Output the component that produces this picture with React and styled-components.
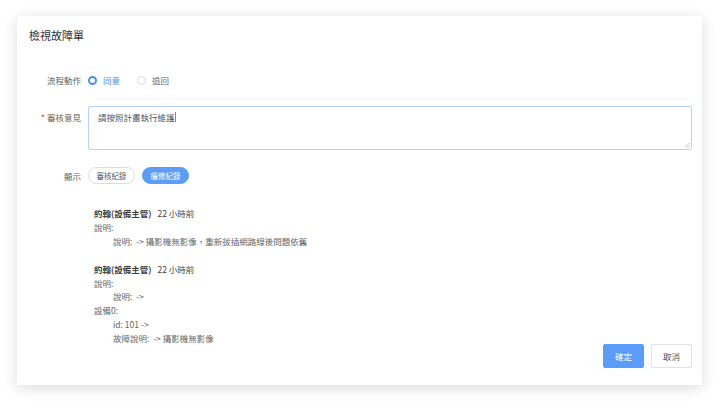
import React from 'react';
import styled, { createGlobalStyle } from 'styled-components';

const GlobalStyle = createGlobalStyle`
  html, body {
    margin: 0;
    padding: 0;
    background: #ffffff;
  }
  body {
    font-family: "Noto Sans CJK TC", "Noto Sans", "Liberation Sans", sans-serif;
    color: #666;
  }
`;

const Page = styled.div`
  width: 720px;
  height: 404px;
  padding: 16px 18px 19px 17px;
  box-sizing: border-box;
  background: #ffffff;
`;

const Card = styled.div`
  height: 100%;
  background: #fff;
  box-shadow: 0 3px 14px rgba(0, 0, 0, 0.14);
  display: flex;
  flex-direction: column;
  padding: 12px 10px 17px 12px;
  box-sizing: border-box;
`;

const Title = styled.div`
  font-size: 11px;
  line-height: 15px;
  color: #333;
`;

const Row = styled.div`
  display: flex;
  align-items: ${p => (p.$top ? 'flex-start' : 'center')};
  margin-top: ${p => p.$mt}px;
`;

const Label = styled.div`
  width: 52px;
  flex: none;
  text-align: right;
  font-size: 8.5px;
  line-height: 16px;
  color: #666;
  margin-right: 7px;
  padding-top: ${p => (p.$top ? '3px' : '0')};

  &::before {
    content: ${p => (p.$required ? "'* '" : "''")};
    color: #f5222d;
  }
`;

const RadioGroup = styled.div`
  display: flex;
  align-items: center;
  gap: 17px;
`;

const RadioItem = styled.label`
  display: flex;
  align-items: center;
  gap: 6px;
  font-size: 8.5px;
  line-height: 16px;
  color: ${p => (p.$checked ? '#4a90f0' : '#666')};
`;

const RadioDot = styled.span`
  width: 9px;
  height: 9px;
  border-radius: 50%;
  box-sizing: border-box;
  border: ${p => (p.$checked ? '2.5px solid #4a90f0' : '1px solid #dcdcdc')};
  background: #fff;
  display: inline-block;
`;

const TextArea = styled.div`
  flex: 1;
  height: 44px;
  box-sizing: border-box;
  border: 1px solid #b7d1f8;
  border-radius: 2px;
  padding: 3px 9px;
  font-size: 8.5px;
  line-height: 14px;
  color: #555;
  position: relative;
`;

const Caret = styled.span`
  display: inline-block;
  width: 1px;
  height: 10px;
  background: #888;
  vertical-align: -1px;
`;

const Resize = styled.svg`
  position: absolute;
  right: 1px;
  bottom: 1px;
`;

const Pills = styled.div`
  display: flex;
  gap: 7px;
`;

const Pill = styled.button`
  height: 17px;
  width: 47px;
  padding: 0;
  border-radius: 9px;
  font-family: inherit;
  font-size: 7.5px;
  line-height: 15px;
  border: 1px solid ${p => (p.$active ? '#5a9cf8' : '#dcdcdc')};
  background: ${p => (p.$active ? '#5a9cf8' : '#fff')};
  color: ${p => (p.$active ? '#fff' : '#555')};
`;

const Log = styled.div`
  margin-top: 23px;
  margin-left: 65px;
  height: 131px;
  font-size: 8.5px;
  line-height: 13.9px;
  color: #666;
`;

const Entry = styled.div`
  & + & {
    margin-top: 13.9px;
  }
`;

const Head = styled.div`
  color: #444;
`;

const Name = styled.span`
  font-weight: 700;
  margin-right: 6px;
`;

const Line = styled.div`
  padding-left: ${p => (p.$indent ? '19px' : '0')};
  white-space: pre;
`;

const Footer = styled.div`
  margin-top: auto;
  display: flex;
  justify-content: flex-end;
  gap: 7px;
`;

const Button = styled.button`
  width: 41px;
  height: 24px;
  padding: 0;
  border-radius: 2px;
  font-family: inherit;
  font-size: 8.5px;
  border: 1px solid ${p => (p.$primary ? '#5a9cf8' : '#e3e3e3')};
  background: ${p => (p.$primary ? '#5a9cf8' : '#fff')};
  color: ${p => (p.$primary ? '#fff' : '#555')};
`;

const entries = [
  {
    name: '約翰(設備主管)',
    time: '22 小時前',
    lines: [
      { text: '說明:' },
      { text: '說明:  -> 攝影機無影像，重新拔插網路線後問題依舊', indent: true },
    ],
  },
  {
    name: '約翰(設備主管)',
    time: '22 小時前',
    lines: [
      { text: '說明:' },
      { text: '說明:  ->', indent: true },
      { text: '設備0:' },
      { text: 'id: 101 ->', indent: true },
      { text: '故障說明:  -> 攝影機無影像', indent: true },
    ],
  },
];

const App = () => (
  <>
    <GlobalStyle />
    <Page>
      <Card>
        <Title>檢視故障單</Title>

        <Row $mt={29}>
          <Label>流程動作</Label>
          <RadioGroup>
            <RadioItem $checked>
              <RadioDot $checked />
              同意
            </RadioItem>
            <RadioItem>
              <RadioDot />
              退回
            </RadioItem>
          </RadioGroup>
        </Row>

        <Row $mt={18} $top>
          <Label $top $required>審核意見</Label>
          <TextArea>
            請按照計畫執行維護<Caret />
            <Resize width="6" height="6" viewBox="0 0 6 6">
              <path d="M5.5 1 L1 5.5 M5.5 3.5 L3.5 5.5" stroke="#aaa" strokeWidth="0.7" />
            </Resize>
          </TextArea>
        </Row>

        <Row $mt={17}>
          <Label>顯示</Label>
          <Pills>
            <Pill>審核紀錄</Pill>
            <Pill $active>編修紀錄</Pill>
          </Pills>
        </Row>

        <Log>
          {entries.map((e, i) => (
            <Entry key={i}>
              <Head>
                <Name>{e.name}</Name>
                {e.time}
              </Head>
              {e.lines.map((l, j) => (
                <Line key={j} $indent={l.indent}>{l.text}</Line>
              ))}
            </Entry>
          ))}
        </Log>

        <Footer>
          <Button $primary>確定</Button>
          <Button>取消</Button>
        </Footer>
      </Card>
    </Page>
  </>
);

export default App;
